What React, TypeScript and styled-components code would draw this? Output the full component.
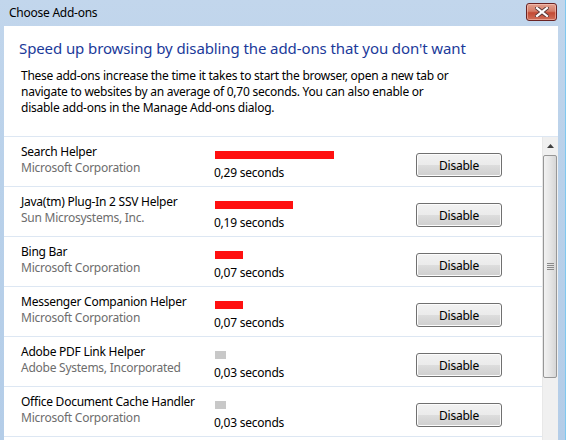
import styled, { createGlobalStyle } from 'styled-components';

const FONT = `"Segoe UI", "Noto Sans", sans-serif`;

const GlobalStyle = createGlobalStyle`
  * {
    box-sizing: border-box;
    margin: 0;
    padding: 0;
  }

  body {
    font-family: ${FONT};
    font-size: 12px;
    letter-spacing: -0.25px;
    background: #b9d1ea;
    overflow: hidden;
  }
`;

const Window = styled.div`
  width: 566px;
  height: 440px;
  display: flex;
  flex-direction: column;
  background: linear-gradient(180deg, #c2d6ec 0%, #b9d1ea 40%, #b4cde8 100%);
  border-right: 1px solid #7fc8ef;
`;

const TitleBar = styled.div`
  height: 26px;
  display: flex;
  align-items: center;
  justify-content: space-between;
  padding: 0 8px 0 9px;
`;

const Title = styled.span`
  color: #000;
  font-size: 12px;
  line-height: 16px;
`;

const CloseButton = styled.div`
  width: 31px;
  height: 18px;
  margin-top: -2px;
  border: 1px solid #6a2323;
  border-radius: 3px;
  background: linear-gradient(180deg, #e2a08f 0%, #d47c68 45%, #c34a34 55%, #d0705a 100%);
  display: flex;
  align-items: center;
  justify-content: center;
  box-shadow: inset 0 0 0 1px rgba(255, 210, 200, 0.5);
`;

const Client = styled.div`
  flex: 1;
  margin: 0 7px 0 4px;
  background: #fff;
  display: flex;
  flex-direction: column;
  min-height: 0;
`;

const Header = styled.div`
  padding: 12px 0 20px 15px;
`;

const Heading = styled.h1`
  font-size: 15px;
  font-weight: normal;
  line-height: 21px;
  letter-spacing: -0.1px;
  color: #1b3a9a;
`;

const Description = styled.p`
  margin: 9px 0 0 2px;
  font-size: 12px;
  line-height: 16px;
  color: #000;
  white-space: nowrap;
`;

const ListArea = styled.div`
  flex: 1;
  display: flex;
  min-height: 0;
  border-top: 1px solid #dde7f3;
`;

const List = styled.div`
  flex: 1;
  overflow: hidden;
`;

const Row = styled.div`
  height: 50px;
  display: grid;
  grid-template-columns: 194px 201px 86px;
  padding: 7px 0 0 17px;
  border-bottom: 1px solid #dde7f3;
`;

const Info = styled.div`
  display: flex;
  flex-direction: column;
  line-height: 16px;
`;

const Name = styled.span`
  color: #000;
`;

const Publisher = styled.span`
  color: #6d6d6d;
`;

const Timing = styled.div`
  display: flex;
  flex-direction: column;
  padding-top: 7px;
`;

const Bar = styled.div<{ $slow: boolean }>`
  height: 8px;
  background: ${(p) => (p.$slow ? '#ff1010' : '#c8c8c8')};
`;

const Seconds = styled.span`
  margin: 6px 0 0 -1px;
  line-height: 16px;
  color: #000;
`;

const DisableButton = styled.button`
  margin-top: 9px;
  width: 86px;
  height: 24px;
  font-family: ${FONT};
  font-size: 12px;
  letter-spacing: -0.25px;
  color: #000;
  border: 1px solid #707070;
  border-radius: 3px;
  background: linear-gradient(180deg, #f2f2f2 0%, #ebebeb 50%, #dddddd 51%, #cfcfcf 100%);
  box-shadow: inset 0 0 0 1px #fcfcfc;
`;

const Scrollbar = styled.div`
  width: 16px;
  display: flex;
  flex-direction: column;
  background: #f0f0f0;
  border-left: 1px solid #e8e8e8;
`;

const ArrowButton = styled.div`
  height: 18px;
  display: flex;
  align-items: center;
  justify-content: center;
`;

const Thumb = styled.div`
  margin: 0 1px 0 0;
  height: 223px;
  border: 1px solid #979797;
  border-radius: 2px;
  background: linear-gradient(90deg, #f2f2f2 0%, #e6e6e6 50%, #d6d6d6 100%);
  display: flex;
  align-items: center;
  justify-content: center;
`;

type Addon = { name: string; publisher: string; time: number };

const addons: Addon[] = [
  { name: 'Search Helper', publisher: 'Microsoft Corporation', time: 0.29 },
  { name: 'Java(tm) Plug-In 2 SSV Helper', publisher: 'Sun Microsystems, Inc.', time: 0.19 },
  { name: 'Bing Bar', publisher: 'Microsoft Corporation', time: 0.07 },
  { name: 'Messenger Companion Helper', publisher: 'Microsoft Corporation', time: 0.07 },
  { name: 'Adobe PDF Link Helper', publisher: 'Adobe Systems, Incorporated', time: 0.03 },
  { name: 'Office Document Cache Handler', publisher: 'Microsoft Corporation', time: 0.03 },
];

const barWidth = (t: number) => {
  if (t >= 0.25) return 119;
  if (t >= 0.15) return 78;
  if (t >= 0.05) return 28;
  return 11;
};

const CloseIcon = () => (
  <svg width="14" height="10" viewBox="0 0 14 10">
    <path d="M2 1 L12 9 M12 1 L2 9" stroke="#5a3a3a" strokeWidth="4" strokeLinecap="square" />
    <path d="M2 1 L12 9 M12 1 L2 9" stroke="#ffffff" strokeWidth="2.2" strokeLinecap="square" />
  </svg>
);

const App = () => {
  return (
    <>
      <GlobalStyle />
      <Window>
        <TitleBar>
          <Title>Choose Add-ons</Title>
          <CloseButton>
            <CloseIcon />
          </CloseButton>
        </TitleBar>
        <Client>
          <Header>
            <Heading>Speed up browsing by disabling the add-ons that you don't want</Heading>
            <Description>
              These add-ons increase the time it takes to start the browser, open a new tab or
              <br />
              navigate to websites by an average of 0,70 seconds. You can also enable or
              <br />
              disable add-ons in the Manage Add-ons dialog.
            </Description>
          </Header>
          <ListArea>
            <List>
              {addons.map((a) => (
                <Row key={a.name}>
                  <Info>
                    <Name>{a.name}</Name>
                    <Publisher>{a.publisher}</Publisher>
                  </Info>
                  <Timing>
                    <Bar $slow={a.time >= 0.05} style={{ width: barWidth(a.time) }} />
                    <Seconds>{a.time.toFixed(2).replace('.', ',')} seconds</Seconds>
                  </Timing>
                  <DisableButton type="button">Disable</DisableButton>
                </Row>
              ))}
            </List>
            <Scrollbar>
              <ArrowButton>
                <svg width="7" height="4" viewBox="0 0 7 4">
                  <path d="M0 4 L3.5 0 L7 4 Z" fill="#404040" />
                </svg>
              </ArrowButton>
              <Thumb>
                <svg width="7" height="7" viewBox="0 0 7 7">
                  <path d="M0 0.5 H7 M0 2.5 H7 M0 4.5 H7 M0 6.5 H7" stroke="#8a8a8a" strokeWidth="1" />
                </svg>
              </Thumb>
            </Scrollbar>
          </ListArea>
        </Client>
      </Window>
    </>
  );
};

export default App;
